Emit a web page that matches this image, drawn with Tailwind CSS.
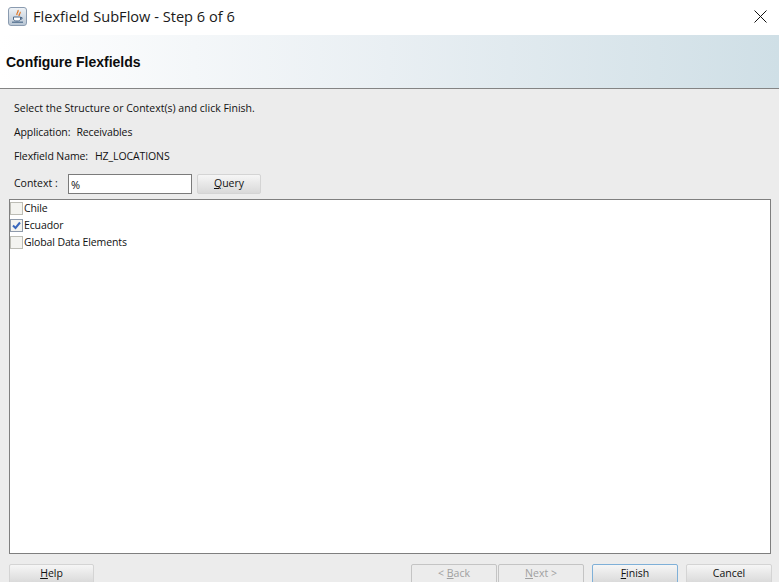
<!DOCTYPE html>
<html lang="en">
<head>
<meta charset="utf-8">
<title>Flexfield SubFlow - Step 6 of 6</title>
<script src="https://cdn.jsdelivr.net/npm/@tailwindcss/browser@4"></script>
</head>
<body class="w-[779px] h-[582px] overflow-hidden bg-[#ececec] text-[#111] font-['Open_Sans','Liberation_Sans',sans-serif] text-[10.5px]">

<!-- title bar -->
<div class="h-[35px] bg-white flex items-center pl-[8px] pr-[12px]">
    <div class="w-[19px] h-[19px] mb-[3px] rounded-[3px] border border-[#8a9bb0] bg-gradient-to-b from-[#eef2f6] to-[#b9c6d4] flex items-center justify-center">
        <svg width="13" height="15" viewBox="0 0 13 15" fill="none">
            <path d="M7 1C8 3 5 4 6 6M9 3C10 4 8 5 8 7" stroke="#e0701a" stroke-width="1.2"/>
            <path d="M2.5 8H9.5V10C9.5 11.5 8 12 6 12S2.5 11.5 2.5 10Z" fill="#fff" stroke="#4f6b8c"/>
            <path d="M9.5 8.5H11V10H9.5" stroke="#4f6b8c"/>
            <path d="M1 13.2H12" stroke="#4f6b8c" stroke-width="1.2"/>
        </svg>
    </div>
    <span class="ml-[6px] mb-[1px] text-[14.6px] text-[#1a1a1a]">Flexfield SubFlow - Step 6 of 6</span>
    <svg class="ml-auto mb-[3px]" width="13" height="13" viewBox="0 0 13 13" fill="none">
        <path d="M0.5 0.5L12.5 12.5M12.5 0.5L0.5 12.5" stroke="#111" stroke-width="1"/>
    </svg>
</div>

<!-- banner -->
<div class="h-[54px] pl-[6px] pt-[2px] flex items-center bg-gradient-to-r from-white via-[#e9eff3] to-[#cfdfe6] border-b border-[#848484]">
    <h1 class="text-[14px] font-bold text-[#0c0c0c] font-['Liberation_Sans',sans-serif]">Configure Flexfields</h1>
</div>

<!-- form -->
<div class="pl-[9px] pr-[7px]">
    <div class="h-[24px] mt-[8px] pl-[5px] flex items-center">Select the Structure or Context(s) and click Finish.</div>
    <div class="h-[24px] pl-[5px] flex items-center gap-[6px] tracking-[-0.1px]"><span>Application:</span><span>Receivables</span></div>
    <div class="h-[24px] pl-[5px] flex items-center gap-[7px] tracking-[-0.1px]"><span>Flexfield Name:</span><span>HZ_LOCATIONS</span></div>
    <div class="h-[24px] mt-[3px] pl-[5px] flex items-center">
        <span class="w-[54px]">Context :</span>
        <input value="%" class="w-[124px] h-[20px] px-[2px] bg-white border border-[#7b7b7b] outline-none text-[11px]">
        <button class="ml-[5px] w-[64px] h-[20px] rounded-[2px] border border-[#d4d4d4] bg-gradient-to-b from-[#f6f6f6] to-[#d9d9d9]"><u>Q</u>uery</button>
    </div>

    <!-- context list -->
    <div class="mt-[3px] mr-[1px] h-[355px] bg-white border border-[#7f7f7f] tracking-[-0.12px]">
        <label class="h-[17px] flex items-center">
            <span class="w-[13px] h-[13px] mr-[1px] bg-[#f4f4f0] border border-[#bdbdb5]"></span>
            <span>Chile</span>
        </label>
        <label class="h-[17px] flex items-center">
            <span class="w-[13px] h-[13px] mr-[1px] bg-[#f4f4f0] border border-[#8f9bab] flex items-center justify-center">
                <svg width="9" height="9" viewBox="0 0 9 9" fill="none"><path d="M1 4.5L3.5 7L8 1.5" stroke="#3a68bd" stroke-width="2"/></svg>
            </span>
            <span>Ecuador</span>
        </label>
        <label class="h-[17px] flex items-center">
            <span class="w-[13px] h-[13px] mr-[1px] bg-[#f4f4f0] border border-[#bdbdb5]"></span>
            <span>Global Data Elements</span>
        </label>
    </div>

    <!-- buttons -->
    <div class="mt-[10px] flex">
        <button class="w-[85px] h-[20px] rounded-[2px] border border-[#d4d4d4] bg-gradient-to-b from-[#f6f6f6] to-[#d9d9d9]"><u>H</u>elp</button>
        <button disabled class="ml-auto w-[86px] h-[20px] rounded-[2px] border border-[#c4c4c4] text-[#a0a0a0]">&lt; <u>B</u>ack</button>
        <button disabled class="ml-[1px] w-[86px] h-[20px] rounded-[2px] border border-[#c4c4c4] text-[#a0a0a0]"><u>N</u>ext &gt;</button>
        <button class="ml-[8px] w-[86px] h-[20px] rounded-[2px] border border-[#7fb0d8] bg-gradient-to-b from-[#f6f6f6] to-[#d9d9d9]"><u>F</u>inish</button>
        <button class="ml-[8px] w-[86px] h-[20px] rounded-[2px] border border-[#d4d4d4] bg-gradient-to-b from-[#f6f6f6] to-[#d9d9d9]">Cancel</button>
    </div>
</div>
</body>
</html>
